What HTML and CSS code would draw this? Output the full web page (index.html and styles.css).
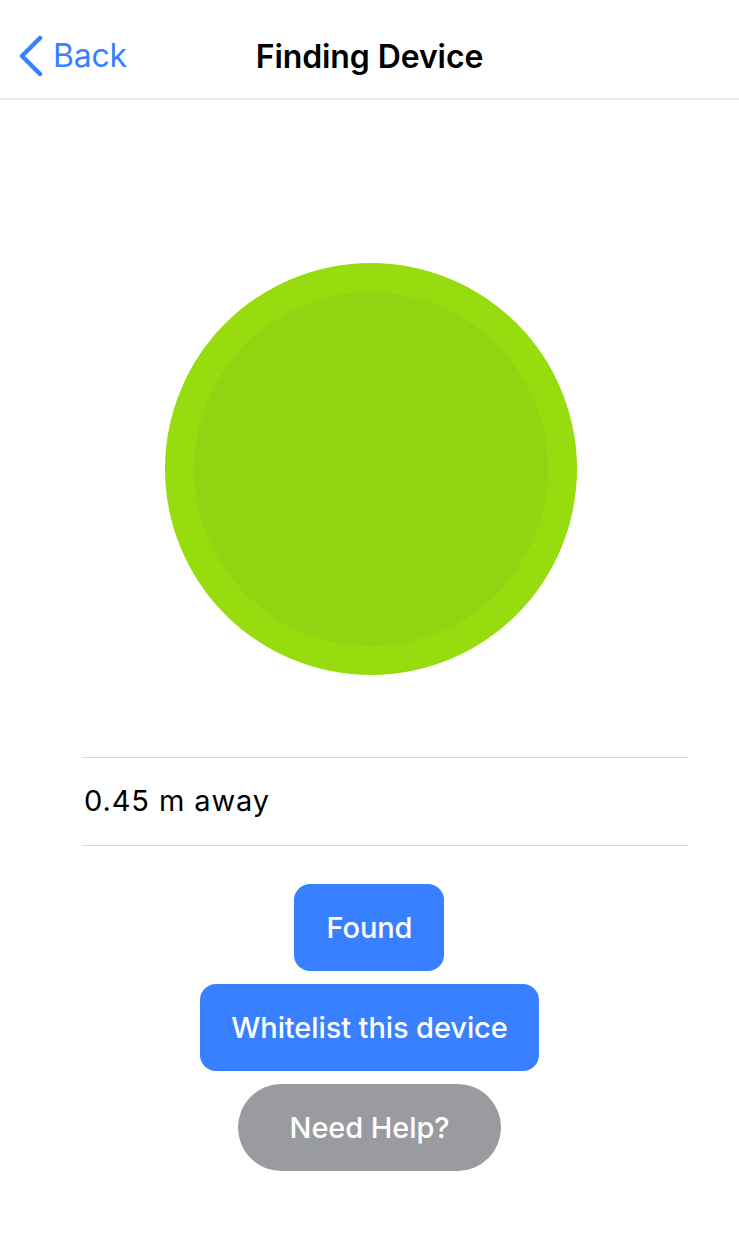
FILE: index.html
```html
<!DOCTYPE html>
<html lang="en">
<head>
<meta charset="utf-8">
<title>Finding Device</title>
<link rel="stylesheet" href="styles.css">
</head>
<body>
<header class="navbar">
  <a class="back" href="#">
    <svg class="chevron" width="26" height="42" viewBox="0 0 26 42" aria-hidden="true">
      <path d="M22 3 L4 21 L22 39" fill="none" stroke="#3880ff" stroke-width="4.5" stroke-linecap="round" stroke-linejoin="round"/>
    </svg>
    <span>Back</span>
  </a>
  <h1 class="title">Finding Device</h1>
</header>
<main class="content">
  <div class="signal">
    <div class="signal-inner"></div>
  </div>
  <div class="distance">
    <div class="distance-row">0.45 m away</div>
  </div>
  <div class="actions">
    <button class="btn btn-primary btn-found">Found</button>
    <button class="btn btn-primary">Whitelist this device</button>
    <button class="btn btn-muted">Need Help?</button>
  </div>
</main>
</body>
</html>
```
FILE: styles.css
```css
* { box-sizing: border-box; }
html, body { margin: 0; padding: 0; background: #ffffff; }
body {
  font-family: Inter, Roboto, "Liberation Sans", sans-serif;
  color: #000;
  width: 739px;
}
.navbar {
  position: relative;
  height: 100px;
  border-bottom: 2px solid #e9e9e9;
  display: flex;
  align-items: center;
  justify-content: center;
}
.back {
  position: absolute;
  left: 18px;
  top: 35px;
  display: flex;
  align-items: center;
  gap: 9px;
  color: #3880ff;
  text-decoration: none;
  font-size: 32px;
  line-height: 42px;
  letter-spacing: -0.2px;
}
.chevron { display: block; }
.title {
  margin: 0;
  margin-top: 14px;
  font-size: 32px;
  font-weight: 600;
  letter-spacing: -0.1px;
}
.content {
  display: flex;
  flex-direction: column;
  align-items: center;
  padding-top: 163px;
}
.signal {
  width: 412px;
  height: 412px;
  border-radius: 50%;
  background: #97dc0f;
  display: flex;
  align-items: center;
  justify-content: center;
  margin-left: 3px;
}
.signal-inner {
  width: 354px;
  height: 354px;
  border-radius: 50%;
  background: #91d412;
}
.distance {
  align-self: stretch;
  margin: 82px 51px 0 82px;
  border-top: 1px solid #d9d9d9;
  border-bottom: 1px solid #d9d9d9;
}
.distance-row {
  height: 87px;
  display: flex;
  align-items: center;
  padding-left: 2px;
  padding-bottom: 2px;
  font-size: 29px;
  font-weight: 400;
  letter-spacing: 0.9px;
}
.actions {
  display: flex;
  flex-direction: column;
  align-items: center;
  gap: 13px;
  margin-top: 38px;
}
.btn {
  border: none;
  font-family: inherit;
  font-size: 29px;
  font-weight: 500;
  color: #fff;
  height: 87px;
  padding: 0 31px;
  border-radius: 16px;
  letter-spacing: -0.1px;
}
.btn-primary { background: #3880ff; }
.btn-found { width: 150px; padding: 0; }
.btn-muted {
  background: #999ba1;
  border-radius: 44px;
  padding: 0 52px;
}
```
